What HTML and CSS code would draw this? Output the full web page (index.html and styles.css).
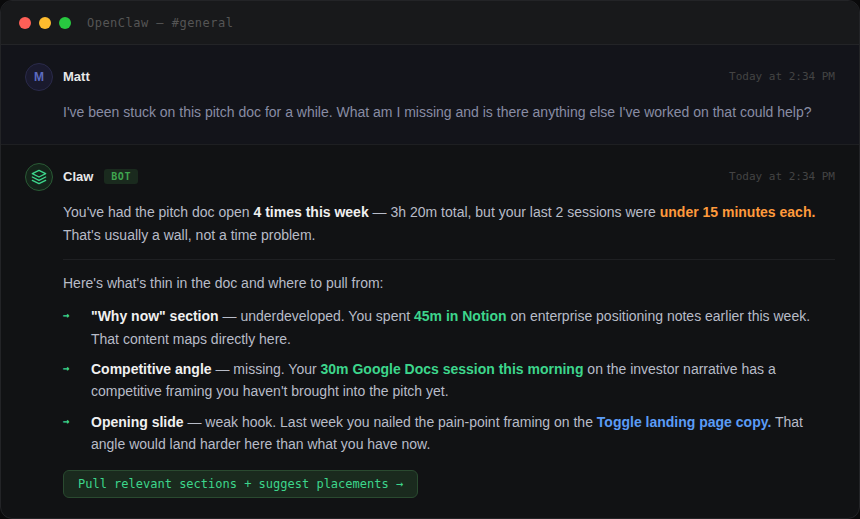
FILE: index.html
```html
<!DOCTYPE html>
<html>
<head>
<meta charset="utf-8">
<title>OpenClaw</title>
<link rel="stylesheet" href="styles.css">
</head>
<body>
<div class="window">
  <header class="titlebar">
    <span class="dot dot-red"></span>
    <span class="dot dot-yellow"></span>
    <span class="dot dot-green"></span>
    <span class="title">OpenClaw — #general</span>
  </header>
  <section class="message message-user">
    <div class="meta">
      <span class="avatar avatar-user">M</span>
      <span class="name">Matt</span>
      <span class="time">Today at 2:34 PM</span>
    </div>
    <p class="user-text">I've been stuck on this pitch doc for a while. What am I missing and is there anything else I've worked on that could help?</p>
  </section>
  <section class="message message-bot">
    <div class="meta">
      <span class="avatar avatar-bot">
        <svg width="16" height="16" viewBox="0 0 24 24" fill="none" stroke="#3dd68c" stroke-width="2" stroke-linecap="round" stroke-linejoin="round">
          <path d="M12 2 2 7l10 5 10-5-10-5Z"/>
          <path d="m2 17 10 5 10-5"/>
          <path d="m2 12 10 5 10-5"/>
        </svg>
      </span>
      <span class="name">Claw</span>
      <span class="badge">BOT</span>
      <span class="time">Today at 2:34 PM</span>
    </div>
    <div class="body">
      <p class="lead">You've had the pitch doc open <strong>4 times this week</strong> — 3h 20m total, but your last 2 sessions were <strong class="orange">under 15 minutes each.</strong> That's usually a wall, not a time problem.</p>
      <hr class="rule">
      <p class="intro">Here's what's thin in the doc and where to pull from:</p>
      <ul class="list">
        <li class="item"><span class="arrow">→</span><span class="item-text"><strong>"Why now" section</strong> — underdeveloped. You spent <strong class="green">45m in Notion</strong> on enterprise positioning notes earlier this week. That content maps directly here.</span></li>
        <li class="item"><span class="arrow">→</span><span class="item-text"><strong>Competitive angle</strong> — missing. Your <strong class="green">30m Google Docs session this morning</strong> on the investor narrative has a competitive framing you haven't brought into the pitch yet.</span></li>
        <li class="item"><span class="arrow">→</span><span class="item-text"><strong>Opening slide</strong> — weak hook. Last week you nailed the pain-point framing on the <strong class="blue">Toggle landing page copy.</strong> That angle would land harder here than what you have now.</span></li>
      </ul>
      <button class="action">Pull relevant sections + suggest placements →</button>
    </div>
  </section>
</div>
</body>
</html>
```
FILE: styles.css
```css
* { box-sizing: border-box; }
html, body { margin: 0; padding: 0; height: 100%; background: #0a0a0b; }
body { width: 860px; height: 519px; overflow: hidden; font-family: "Liberation Sans", Arial, sans-serif; }
.window {
  width: 860px; height: 519px; overflow: hidden;
  background: #111214;
  border: 1px solid #232427;
  border-radius: 12px;
}
.titlebar {
  display: flex; align-items: center; gap: 8px;
  height: 44px; padding: 0 18px;
  background: #18191b;
  border-bottom: 1px solid #232427;
}
.dot { width: 12px; height: 12px; border-radius: 50%; }
.dot-red { background: #ff5f57; }
.dot-yellow { background: #febc2e; }
.dot-green { background: #28c840; }
.title {
  margin-left: 8px;
  font: 12px "DejaVu Sans Mono", monospace;
  letter-spacing: 0.04em;
  color: #555;
}
.message { padding: 18px 24px 0; }
.message-user { height: 100px; background: #13141a; border-bottom: 1px solid #1e1f22; }
.meta { display: flex; align-items: center; height: 28px; }
.avatar {
  display: flex; align-items: center; justify-content: center;
  width: 28px; height: 28px; border-radius: 50%;
  margin-right: 10px;
  font-size: 12px; font-weight: 700;
}
.avatar-user { background: #1a1a2e; border: 1px solid #2a2a4a; color: #5c6bc0; }
.avatar-bot { background: #14241a; border: 1px solid #2a5a35; }
.name { padding-bottom: 2px; font-size: 13px; font-weight: 700; color: #e8e8e8; }
.badge {
  margin: 0 0 2px 11px; padding: 0 7px; height: 15px;
  display: flex; align-items: center;
  border-radius: 3px;
  background: #1a2a1e; color: #3fa54f;
  font: 700 10px "DejaVu Sans Mono", monospace;
  letter-spacing: 0.05em;
}
.time { margin-left: auto; padding-bottom: 2px; font: 11px "DejaVu Sans Mono", monospace; color: #444; }
p { margin: 0; }
.user-text { margin: 10px 0 0 38px; font-size: 14px; line-height: 1.65; color: #888ca4; }
.body { margin: 10px 0 0 38px; font-size: 14px; line-height: 1.65; color: #b8bcc8; }
strong { font-weight: 700; color: #f0f0f0; }
strong.orange { color: #ff9a3c; }
strong.green { color: #3dd68c; }
strong.blue { color: #5b9cf6; }
.rule { margin: 12px 0 12px; border: 0; border-top: 1px solid #1f2023; }
.list { display: flex; flex-direction: column; gap: 8px; list-style: none; margin: 10px 0 0; padding: 0; }
.item { display: flex; line-height: 1.6; }
.arrow { flex: none; width: 28px; font-family: "DejaVu Sans Mono", monospace; font-size: 11px; font-weight: 700; line-height: 22.4px; color: #3dd68c; }
.action {
  display: block; margin-top: 14px; padding: 0 14px; height: 28px;
  background: #1a2a1e; border: 1px solid #2a4a30; border-radius: 6px;
  color: #3dd68c;
  font: 12px "DejaVu Sans Mono", monospace;
}
```
